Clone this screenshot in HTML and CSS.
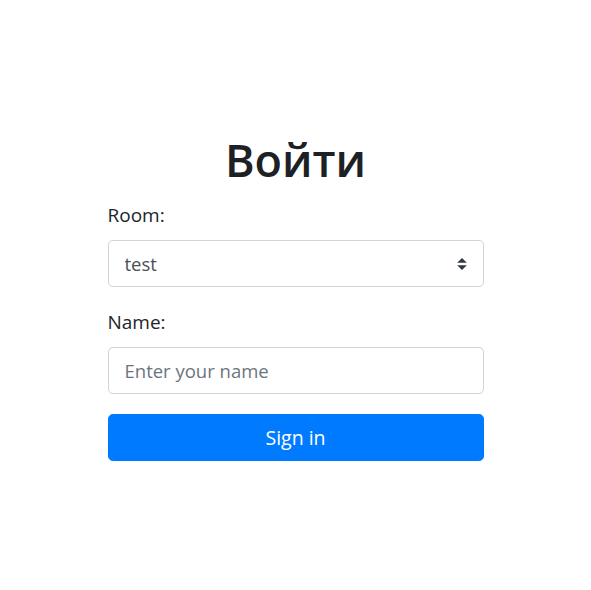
FILE: index.html
```html
<!DOCTYPE html>
<html lang="ru">
<head>
<meta charset="utf-8">
<title>Войти</title>
<link rel="stylesheet" href="styles.css">
</head>
<body>
<main class="page">
  <form class="login">
    <h1 class="title">Войти</h1>
    <div class="group">
      <label class="label" for="room">Room:</label>
      <div class="select-wrap">
        <select id="room" class="control select">
          <option>test</option>
        </select>
        <svg class="arrows" width="10" height="12" viewBox="0 0 4 5"><path d="M2 0L0 2h4zm0 5L0 3h4z" fill="#343a40"/></svg>
      </div>
    </div>
    <div class="group">
      <label class="label" for="name">Name:</label>
      <input id="name" class="control" type="text" placeholder="Enter your name">
    </div>
    <button type="button" class="btn">Sign in</button>
  </form>
</main>
</body>
</html>
```
FILE: styles.css
```css
* { box-sizing: border-box; }
html, body { margin: 0; background: #fff; }
body {
  font-family: "Open Sans", "Noto Sans", sans-serif;
  color: #212529;
}
.page {
  display: flex;
  justify-content: center;
  padding-top: 133px;
}
.login {
  width: 376px;
  display: flex;
  flex-direction: column;
}
.title {
  margin: 0 0 13px;
  text-align: center;
  font-size: 45px;
  font-weight: 600;
  line-height: 1.2;
  color: #1d2125;
}
.group {
  display: flex;
  flex-direction: column;
  margin-bottom: 20px;
}
.label {
  font-size: 19px;
  line-height: 30px;
  margin-bottom: 10px;
}
.select-wrap { position: relative; }
.control {
  width: 100%;
  height: 47px;
  padding: 0 16px;
  font-family: inherit;
  font-size: 18.5px;
  color: #495057;
  background: #fff;
  border: 1px solid #ced4da;
  border-radius: 4.8px;
  outline: none;
  appearance: none;
  -webkit-appearance: none;
}
.control::placeholder { color: #6c757d; }
.arrows {
  position: absolute;
  right: 17px;
  top: 18px;
  pointer-events: none;
}
.btn {
  height: 47px;
  border: 1px solid #007bff;
  background: #007bff;
  color: #fff;
  border-radius: 4.8px;
  font-family: inherit;
  font-size: 19.5px;
  cursor: pointer;
}
```
